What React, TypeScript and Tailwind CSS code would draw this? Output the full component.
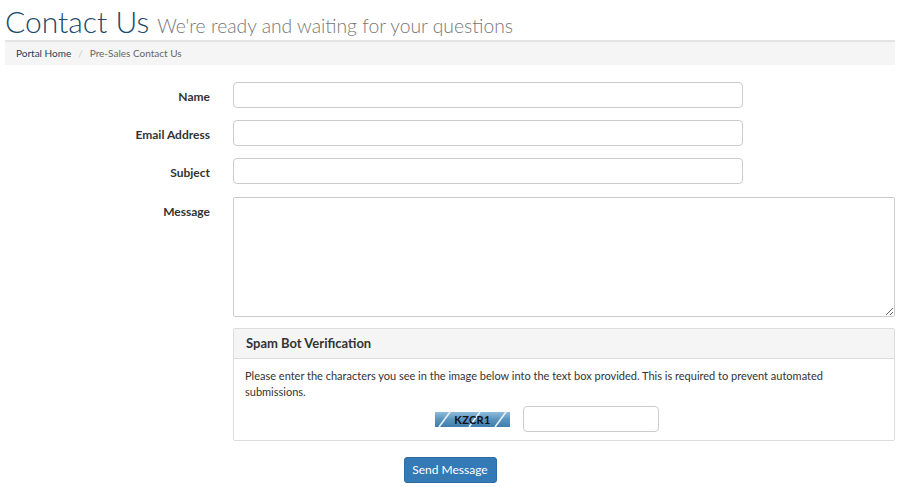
import React from "react";

function Row({ label, children, className = "" }: { label: string; children: React.ReactNode; className?: string }) {
  return (
    <div className={"flex items-start " + className}>
      <label className="w-[210px] shrink-0 text-right text-[12px] font-bold text-[#333] pt-[8px] leading-[14px]">{label}</label>
      <div className="ml-[23px]">{children}</div>
    </div>
  );
}

function Captcha() {
  return (
    <div className="relative w-[75px] h-[15px] overflow-hidden bg-gradient-to-b from-[#8fbbd9] via-[#5a93bf] to-[#3f7eae] flex items-center justify-center">
      <svg className="absolute inset-0" width="75" height="15" viewBox="0 0 75 15">
        <line x1="4" y1="15" x2="15" y2="0" stroke="#e8f2fa" strokeWidth="1.6" />
        <line x1="34" y1="15" x2="45" y2="0" stroke="#e8f2fa" strokeWidth="1.6" />
        <line x1="60" y1="15" x2="71" y2="0" stroke="#e8f2fa" strokeWidth="1.6" />
      </svg>
      <span className="relative text-[11px] font-bold text-[#111] leading-none tracking-[0.3px]">KZCR1</span>
    </div>
  );
}

export default function App() {
  return (
    <div className="w-[900px] h-[487px] bg-white overflow-hidden" style={{ fontFamily: "Lato, 'Open Sans', sans-serif" }}>
      <div className="px-[5px]">
        <h1 className="h-[40px] flex items-end pb-[4px] whitespace-nowrap">
          <span className="text-[30px] leading-[30px] font-light text-[#1b4a6b]" style={{ fontFamily: "Lato, sans-serif" }}>Contact Us</span>
          <span className="ml-[8px] text-[19.3px] leading-[19px] text-[#777] font-light pb-[1px]" style={{ fontFamily: "Lato, sans-serif" }}>We're ready and waiting for your questions</span>
        </h1>
        <div className="h-[25px] border-t-2 border-[#e4e4e4] bg-[#f5f5f5] flex items-center pl-[11px] text-[10px]">
          <span className="text-[#1b3f5e]">Portal Home</span>
          <span className="mx-[7px] text-[#ccc]">/</span>
          <span className="text-[#666]">Pre-Sales Contact Us</span>
        </div>
      </div>

      <div className="mt-[17px] flex flex-col gap-[12px]">
        <Row label="Name">
          <input className="block w-[510px] h-[26px] border border-[#ccc] rounded-[4px] bg-white" />
        </Row>
        <Row label="Email Address">
          <input className="block w-[510px] h-[26px] border border-[#ccc] rounded-[4px] bg-white" />
        </Row>
        <Row label="Subject">
          <input className="block w-[510px] h-[26px] border border-[#ccc] rounded-[4px] bg-white" />
        </Row>
        <Row label="Message" className="mt-[1px]">
          <textarea className="block w-[662px] h-[120px] border border-[#ccc] rounded-[2px] bg-white" />
        </Row>
      </div>

      <div className="ml-[233px] mt-[11px] w-[662px] h-[113px] border border-[#ddd] rounded-[2px]">
        <div className="h-[30px] bg-[#f5f5f5] border-b border-[#ddd] flex items-center pl-[12px] text-[13px] font-bold text-[#333]">
          Spam Bot Verification
        </div>
        <div className="px-[11px] pt-[9px]">
          <p className="text-[11px] leading-[16px] text-[#333]">
            Please enter the characters you see in the image below into the text box provided. This is required to prevent automated submissions.
          </p>
          <div className="flex items-center mt-[6px] pl-[190px]">
            <Captcha />
            <input className="ml-[13px] block w-[136px] h-[26px] border border-[#ccc] rounded-[4px] bg-white" />
          </div>
        </div>
      </div>

      <div className="flex justify-center mt-[16px]">
        <button className="w-[93px] h-[26px] bg-[#337ab7] border border-[#2e6da4] rounded-[3px] text-white text-[12px]">Send Message</button>
      </div>
    </div>
  );
}
